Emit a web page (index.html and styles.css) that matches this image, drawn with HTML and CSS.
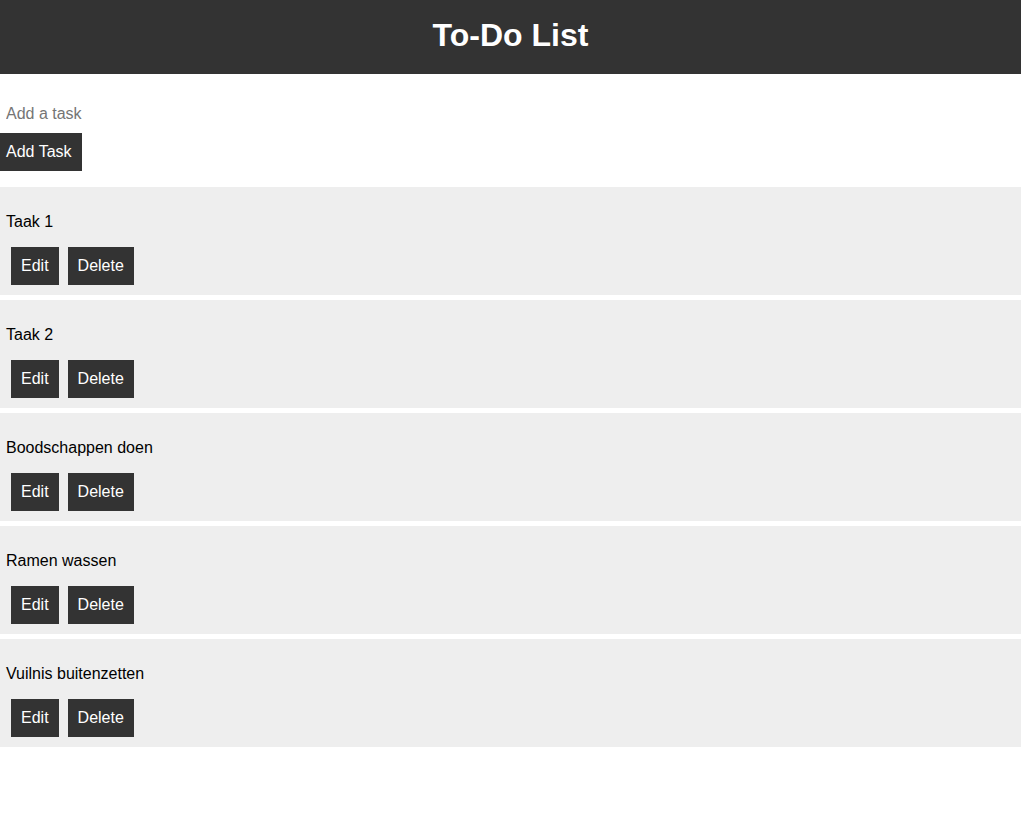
FILE: index.html
```html
<!DOCTYPE html>
<html lang="nl">
<head>
<meta charset="utf-8">
<title>To-Do List</title>
<link rel="stylesheet" href="styles.css">
</head>
<body>
<header class="header"><h1 class="title">To-Do List</h1></header>
<section class="add">
  <input class="add-input" type="text" placeholder="Add a task">
  <button class="btn add-btn">Add Task</button>
</section>
<ul class="list">
  <li class="item"><span class="item-text">Taak 1</span><div class="actions"><button class="btn">Edit</button><button class="btn">Delete</button></div></li>
  <li class="item"><span class="item-text">Taak 2</span><div class="actions"><button class="btn">Edit</button><button class="btn">Delete</button></div></li>
  <li class="item"><span class="item-text">Boodschappen doen</span><div class="actions"><button class="btn">Edit</button><button class="btn">Delete</button></div></li>
  <li class="item"><span class="item-text">Ramen wassen</span><div class="actions"><button class="btn">Edit</button><button class="btn">Delete</button></div></li>
  <li class="item"><span class="item-text">Vuilnis buitenzetten</span><div class="actions"><button class="btn">Edit</button><button class="btn">Delete</button></div></li>
</ul>
</body>
</html>
```
FILE: styles.css
```css
* { box-sizing: border-box; }
body {
  margin: 0;
  font-family: "Liberation Sans", Arial, sans-serif;
  font-size: 16px;
  color: #000;
  background: #fff;
}
.header {
  background: #333;
  color: #fff;
  height: 74px;
  display: flex;
  align-items: center;
  justify-content: center;
}
.title {
  margin: 0 0 4px;
  font-size: 32px;
  line-height: 37px;
  font-weight: bold;
}
.add {
  padding-top: 20px;
  display: flex;
  flex-direction: column;
  align-items: flex-start;
}
.add-input {
  border: none;
  outline: none;
  padding: 11px 6px 7px;
  font: 16px/18px "Liberation Sans", Arial, sans-serif;
  height: 36px;
  width: 200px;
  margin-bottom: 3px;
}
.add-input::placeholder { color: #757575; }
.btn {
  background: #333;
  color: #fff;
  border: none;
  font: 16px/18px "Liberation Sans", Arial, sans-serif;
  padding: 10px;
  height: 38px;
  cursor: pointer;
}
.add-btn { padding: 10px 6px; width: 82px; text-align: left; }
.list {
  list-style: none;
  margin: 16px 0 0;
  padding: 0;
  display: flex;
  flex-direction: column;
  gap: 5px;
}
.item {
  background: #eee;
  padding: 26px 6px 10px;
  display: flex;
  flex-direction: column;
  align-items: flex-start;
}
.item-text { line-height: 18px; }
.actions {
  margin-top: 16px;
  padding-left: 5px;
  display: flex;
  gap: 9px;
}
```
